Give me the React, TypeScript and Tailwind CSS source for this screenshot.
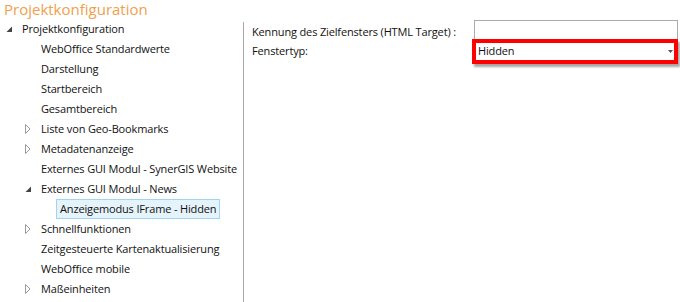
import React from 'react';

type Node = {
  label: string;
  level: number;
  arrow?: 'open' | 'closed';
  selected?: boolean;
};

const nodes: Node[] = [
  { label: 'Projektkonfiguration', level: 0, arrow: 'open' },
  { label: 'WebOffice Standardwerte', level: 1 },
  { label: 'Darstellung', level: 1 },
  { label: 'Startbereich', level: 1 },
  { label: 'Gesamtbereich', level: 1 },
  { label: 'Liste von Geo-Bookmarks', level: 1, arrow: 'closed' },
  { label: 'Metadatenanzeige', level: 1, arrow: 'closed' },
  { label: 'Externes GUI Modul - SynerGIS Website', level: 1 },
  { label: 'Externes GUI Modul - News', level: 1, arrow: 'open' },
  { label: 'Anzeigemodus IFrame - Hidden', level: 2, selected: true },
  { label: 'Schnellfunktionen', level: 1, arrow: 'closed' },
  { label: 'Zeitgesteuerte Kartenaktualisierung', level: 1 },
  { label: 'WebOffice mobile', level: 1 },
  { label: 'Maßeinheiten', level: 1, arrow: 'closed' },
];

const indent = ['pl-[4px]', 'pl-[23px]', 'pl-[42px]'];

const Arrow = ({ kind }: { kind?: 'open' | 'closed' }) => {
  if (!kind) return <span className="w-[18px] shrink-0" />;
  return (
    <span className="w-[18px] shrink-0 flex items-center justify-start pl-[2px]">
      {kind === 'open' ? (
        <svg width="7" height="7" viewBox="0 0 7 7">
          <path d="M6 0.5 L6 6 L0.5 6 Z" fill="#444444" />
        </svg>
      ) : (
        <svg width="6" height="10" viewBox="0 0 6 10">
          <path d="M0.5 0.5 L5 5 L0.5 9.5 Z" fill="white" stroke="#9a9a9a" strokeWidth="1" />
        </svg>
      )}
    </span>
  );
};

export default function App() {
  return (
    <div className="w-[680px] h-[302px] bg-white overflow-hidden whitespace-nowrap text-[11px] tracking-[-0.15px] text-[#111111] font-['Open_Sans',sans-serif]">
      <div className="h-[19px] pl-[4px] leading-[19px] text-[15px] tracking-normal text-[#f0a04e]">
        Projektkonfiguration
      </div>
      <div className="flex">
        <div className="w-[243px] shrink-0">
          {nodes.map((n) => (
            <div key={n.label} className={`h-[20px] flex items-center ${indent[n.level]}`}>
              <Arrow kind={n.arrow} />
              {n.selected ? (
                <span className="h-[20px] flex items-center px-[3px] -ml-[4px] bg-[#e5f3fb] border border-[#9fd4f5]">
                  {n.label}
                </span>
              ) : (
                <span>{n.label}</span>
              )}
            </div>
          ))}
        </div>
        <div className="w-px bg-[#a8a8a8] mt-[3px] h-[300px] shrink-0" />
        <div className="flex-1 pl-[8px] pt-[1px]">
          <div className="flex items-start">
            <div className="w-[222px] pt-[2px] h-[20px] leading-[20px]">Kennung des Zielfensters (HTML Target) :</div>
            <div className="w-[204px] h-[20px] border border-[#ababab] bg-white" />
          </div>
          <div className="flex items-start">
            <div className="w-[220px] h-[20px] leading-[22px]">Fenstertyp:</div>
            <div className="relative w-[206px] h-[25px] border-[4px] border-[#ff0000] shadow-[2px_3px_2px_rgba(0,0,0,0.35)] -mt-[1px]">
              <div className="h-full flex items-center justify-between pl-[2px] pr-[1px] bg-white">
                <span>Hidden</span>
                <svg width="5" height="3" viewBox="0 0 5 3">
                  <path d="M0 0 L5 0 L2.5 3 Z" fill="#555555" />
                </svg>
              </div>
            </div>
          </div>
        </div>
      </div>
    </div>
  );
}
